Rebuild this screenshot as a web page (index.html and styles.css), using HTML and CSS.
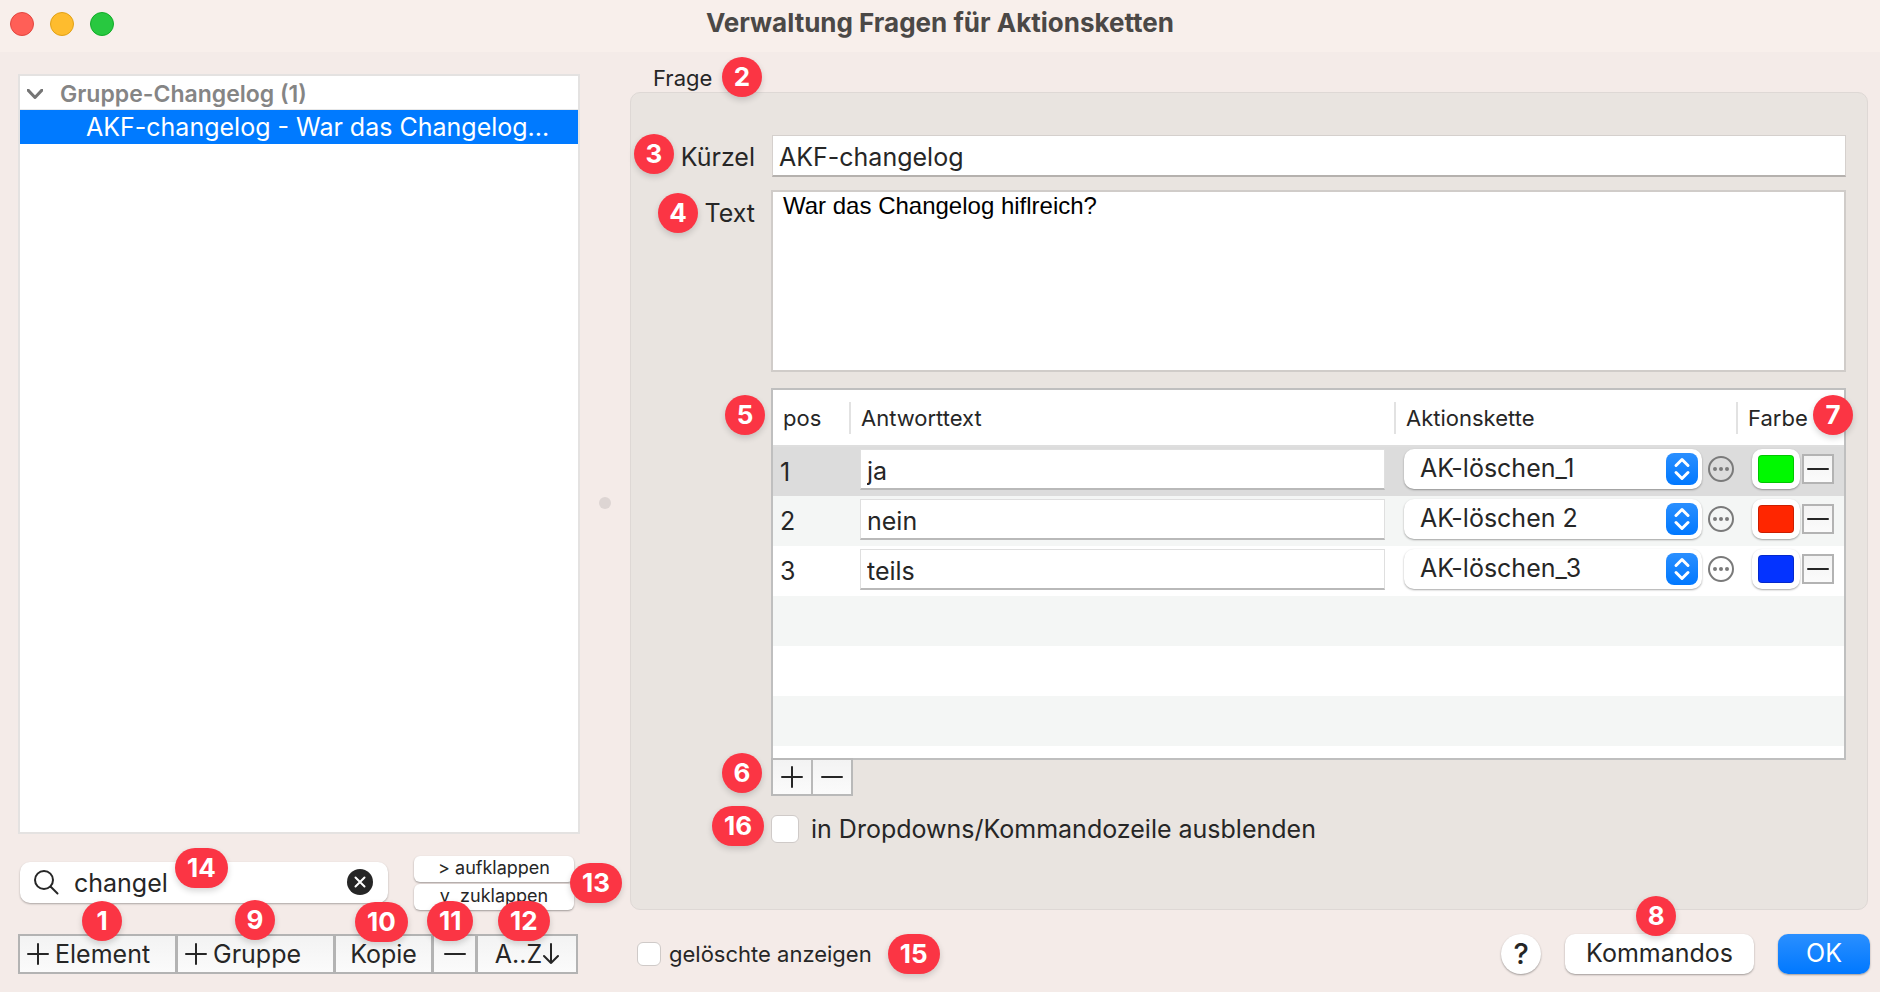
FILE: index.html
```html
<!DOCTYPE html>
<html lang="de">
<head>
<meta charset="utf-8">
<title>Verwaltung Fragen für Aktionsketten</title>
<link rel="stylesheet" href="styles.css">
</head>
<body>
<svg class="defs" aria-hidden="true">
  <symbol id="plus" viewBox="0 0 22 22"><path d="M11 1v20M1 11h20"/></symbol>
  <symbol id="minus" viewBox="0 0 22 22"><path d="M1 11h20"/></symbol>
  <symbol id="updown" viewBox="0 0 32 32"><path d="M10 12.500l6-6 6 6M10 19.500l6 6 6-6"/></symbol>
  <symbol id="more" viewBox="0 0 26 26"><circle cx="13" cy="13" r="12"/><g class="dots"><circle cx="7" cy="13" r="2"/><circle cx="13" cy="13" r="2"/><circle cx="19" cy="13" r="2"/></g></symbol>
</svg>

<header class="titlebar">
  <div class="lights">
    <button class="light light-close" aria-label="Schließen"></button>
    <button class="light light-min" aria-label="Minimieren"></button>
    <button class="light light-zoom" aria-label="Zoomen"></button>
  </div>
  <h1 class="title">Verwaltung Fragen für Aktionsketten</h1>
</header>

<main class="layout">
  <aside class="sidebar">
    <div class="tree">
      <div class="tree-group">
        <svg class="chevron" viewBox="0 0 16 10"><path d="M1 1l7 7.500 7-7.500"/></svg>
        <span>Gruppe-Changelog (1)</span>
      </div>
      <div class="tree-item">AKF-changelog - War das Changelog...</div>
    </div>

    <div class="filter">
      <div class="search">
        <svg class="search-icon" viewBox="0 0 26 26"><circle cx="11" cy="11" r="9"/><path d="M17.500 17.500l7 7"/></svg>
        <input class="search-input" type="text" value="changel" aria-label="Suche">
        <button class="clear" aria-label="Suche leeren"><svg viewBox="0 0 26 26"><path d="M8.500 8.500l9 9M17.500 8.500l-9 9"/></svg></button>
        <span class="badge b14">14</span>
      </div>
      <div class="fold">
        <button class="fold-btn">&gt; aufklappen</button>
        <button class="fold-btn">v&nbsp; zuklappen</button>
        <span class="badge b13">13</span>
      </div>
    </div>

    <div class="segments">
      <div class="seg-cell wide"><button class="seg"><svg class="sign"><use href="#plus"/></svg>Element</button><span class="badge b1">1</span></div>
      <div class="seg-cell wide"><button class="seg"><svg class="sign"><use href="#plus"/></svg>Gruppe</button><span class="badge b9">9</span></div>
      <div class="seg-cell copy"><button class="seg center">Kopie</button><span class="badge b10">10</span></div>
      <div class="seg-cell remove"><button class="seg center" aria-label="Entfernen"><svg class="sign"><use href="#minus"/></svg></button><span class="badge b11">11</span></div>
      <div class="seg-cell sort"><button class="seg center">A..Z<svg class="arrow" viewBox="0 0 16 22"><path d="M8 1v19M1 13l7 7 7-7"/></svg></button><span class="badge b12">12</span></div>
    </div>
  </aside>

  <div class="splitter"><span class="grip"></span></div>

  <section class="detail">
    <div class="caption">Frage<span class="badge b2">2</span></div>
    <div class="panel">
      <div class="form">
        <div class="label-cell"><label for="code">Kürzel</label><span class="badge b3">3</span></div>
        <input class="field" id="code" type="text" value="AKF-changelog">
        <div class="label-cell label-top"><label for="text">Text</label><span class="badge b4">4</span></div>
        <textarea class="area" id="text">War das Changelog hiflreich?</textarea>
        <div class="answers-wrap">
          <div class="answers">
            <table class="grid">
              <colgroup><col class="c-pos"><col><col class="c-chain"><col class="c-color"></colgroup>
              <thead><tr><th>pos</th><th>Antworttext</th><th>Aktionskette</th><th>Farbe</th></tr></thead>
              <tbody>
                <tr class="selected">
                  <td class="pos">1</td>
                  <td><input class="answer" type="text" value="ja" aria-label="Antworttext 1"></td>
                  <td><div class="chain"><div class="pick"><select aria-label="Aktionskette 1"><option>AK-löschen_1</option></select><svg class="stepper"><use href="#updown"/></svg></div><button class="more" aria-label="Mehr"><svg><use href="#more"/></svg></button></div></td>
                  <td><div class="tint"><button class="well" aria-label="Farbe Grün"><span class="swatch green"></span></button><button class="drop" aria-label="Zeile entfernen"><svg><use href="#minus"/></svg></button></div></td>
                </tr>
                <tr>
                  <td class="pos">2</td>
                  <td><input class="answer" type="text" value="nein" aria-label="Antworttext 2"></td>
                  <td><div class="chain"><div class="pick"><select aria-label="Aktionskette 2"><option>AK-löschen 2</option></select><svg class="stepper"><use href="#updown"/></svg></div><button class="more" aria-label="Mehr"><svg><use href="#more"/></svg></button></div></td>
                  <td><div class="tint"><button class="well" aria-label="Farbe Rot"><span class="swatch red"></span></button><button class="drop" aria-label="Zeile entfernen"><svg><use href="#minus"/></svg></button></div></td>
                </tr>
                <tr>
                  <td class="pos">3</td>
                  <td><input class="answer" type="text" value="teils" aria-label="Antworttext 3"></td>
                  <td><div class="chain"><div class="pick"><select aria-label="Aktionskette 3"><option>AK-löschen_3</option></select><svg class="stepper"><use href="#updown"/></svg></div><button class="more" aria-label="Mehr"><svg><use href="#more"/></svg></button></div></td>
                  <td><div class="tint"><button class="well" aria-label="Farbe Blau"><span class="swatch blue"></span></button><button class="drop" aria-label="Zeile entfernen"><svg><use href="#minus"/></svg></button></div></td>
                </tr>
              </tbody>
            </table>
          </div>
          <span class="badge b5">5</span>
          <span class="badge b7">7</span>
        </div>
        <div class="row-tools">
          <button class="tool" aria-label="Zeile hinzufügen"><svg><use href="#plus"/></svg></button>
          <button class="tool" aria-label="Zeile löschen"><svg><use href="#minus"/></svg></button>
          <span class="badge b6">6</span>
        </div>
        <label class="check hide-check"><input type="checkbox"><span>in Dropdowns/Kommandozeile ausblenden</span><span class="badge b16">16</span></label>
      </div>
    </div>
    <footer class="footer">
      <label class="check deleted-check"><input type="checkbox"><span>gelöschte anzeigen</span></label>
      <span class="badge b15">15</span>
      <div class="actions">
        <button class="help" aria-label="Hilfe">?</button>
        <div class="commands"><button class="push">Kommandos</button><span class="badge b8">8</span></div>
        <button class="push primary">OK</button>
      </div>
    </footer>
  </section>
</main>
</body>
</html>
```
FILE: styles.css
```css
* { box-sizing: border-box; }

body {
  margin: 0;
  min-height: 100vh;
  display: flex;
  flex-direction: column;
  background: #f4ebe8;
  color: #262626;
  font: 25px/30px Inter, "Liberation Sans", sans-serif;
}

button, input, select, textarea {
  margin: 0;
  padding: 0;
  border: 0;
  border-radius: 0;
  color: inherit;
  font: inherit;
}

svg {
  display: block;
  fill: none;
  stroke: #262626;
  stroke-width: 2;
  stroke-linecap: round;
  stroke-linejoin: round;
}

.defs { position: absolute; width: 0; height: 0; }
.dots { fill: #7a7a7a; stroke: none; }

/* Title bar */
.titlebar {
  display: grid;
  grid-template-columns: 1fr auto 1fr;
  align-items: center;
  height: 52px;
  padding: 0 10px 4px;
  background: #f8efeb;
}
.lights { display: flex; gap: 16px; }
.light { width: 24px; height: 24px; border: 1px solid; border-radius: 50%; }
.light-close { background: #ff5f57; border-color: #e2463f; }
.light-min { background: #febc2e; border-color: #e1a116; }
.light-zoom { background: #28c840; border-color: #12ac28; }
.title { margin: 0; padding-bottom: 2px; font-size: 26px; font-weight: 700; color: #4b4846; }

/* Numbered callouts */
.badge {
  position: absolute;
  min-width: 40px;
  height: 40px;
  padding: 0 12px;
  border-radius: 20px;
  background: #fb3544;
  box-shadow: 0 3px 6px rgba(0, 0, 0, .16);
  color: #fff;
  font: 700 26px/39px Inter, "Liberation Sans", sans-serif;
  text-align: center;
  z-index: 2;
}
.b1 { left: 64px; top: -33px; }
.b9 { left: 59px; top: -34px; }
.b10 { left: 21px; top: -32px; }
.b11 { left: -5px; top: -33px; }
.b12 { left: 22px; top: -33px; }
.b13 { right: -48px; top: 7px; }
.b14 { left: 155px; top: -14px; }
.b2 { left: 92px; }
.b3 { left: 3px; top: -1px; }
.b4 { left: 27px; top: 3px; }
.b5 { left: -46px; top: 7px; }
.b7 { right: -7px; top: 7px; }
.b6 { left: -49px; top: -5px; }
.b16 { left: -59px; top: -8px; }
.b8 { left: 71px; top: -38px; }
.b1, .b2, .b3, .b4, .b5, .b6, .b7, .b8, .b9 { padding: 0; }

.layout {
  flex: 1;
  display: grid;
  grid-template-columns: 562fr 50px 1238fr;
  padding: 0 12px 18px 18px;
}

/* Left column */
.sidebar { display: flex; flex-direction: column; padding-top: 22px; }
.tree { flex: 1; border: 2px solid #e4e2e1; background: #fff; }
.tree-group {
  display: flex;
  align-items: center;
  gap: 17px;
  height: 34px;
  padding: 2px 0 0 7px;
  border-bottom: 1px solid #e8e8e8;
  color: #858585;
  font-size: 23px;
  font-weight: 600;
}
.chevron { width: 16px; height: 10px; stroke: #757575; stroke-width: 3; }
.tree-item {
  height: 34px;
  padding-left: 66px;
  background: #007aff;
  color: #fff;
  line-height: 34px;
  white-space: nowrap;
  overflow: hidden;
}

.filter { display: flex; justify-content: space-between; align-items: center; margin-top: 22px; padding: 0 6px 0 2px; }
.search {
  position: relative;
  display: flex;
  align-items: center;
  width: 368px;
  height: 41px;
  margin-top: -2px;
  padding: 0 15px 0 13px;
  border-radius: 10px;
  background: #fff;
  box-shadow: 0 1px 2px rgba(0, 0, 0, .3);
}
.search-icon { width: 26px; height: 26px; margin-right: 15px; }
.search-input { flex: 1; min-width: 0; padding-top: 2px; background: none; outline: 0; }
.clear { width: 26px; height: 26px; border-radius: 50%; background: #262626; }
.clear svg { stroke: #fff; width: 26px; height: 26px; }
.fold { position: relative; display: flex; flex-direction: column; gap: 2px; width: 160px; }
.fold-btn {
  height: 26px;
  border-radius: 6px;
  background: #fff;
  box-shadow: 0 1px 2px rgba(0, 0, 0, .35);
  font-size: 18px;
  line-height: 24px;
  padding-bottom: 2px;
}

.segments { display: flex; margin-top: 24px; padding-right: 2px; }
.seg-cell { position: relative; margin-left: -1px; }
.seg-cell:first-child { margin-left: 0; }
.wide { flex: 159; }
.copy { flex: 99; }
.remove { flex: 45; }
.sort { flex: 102; }
.seg {
  display: flex;
  align-items: center;
  gap: 6px;
  width: 100%;
  height: 40px;
  padding-left: 7px;
  border: 2px solid #b3b3b3;
  background: linear-gradient(#f3f3f3, #fbfbfb);
}
.seg.center { justify-content: center; padding: 0; gap: 1px; }
.sign { width: 22px; height: 22px; }
.arrow { width: 16px; height: 22px; }

/* Splitter */
.splitter { display: flex; align-items: center; justify-content: center; padding-bottom: 20px; }
.grip { width: 12px; height: 12px; border-radius: 50%; background: #ddd5d3; }

/* Right column */
.detail { display: flex; flex-direction: column; }
.caption { position: relative; padding: 12px 0 0 23px; height: 40px; font-size: 22px; line-height: 28px; }
.caption .badge { top: 5px; }
.panel {
  flex: 1;
  display: flex;
  padding: 42px 21px 65px 0;
  border: 1px solid #ded8d5;
  border-radius: 10px;
  background: #e9e4e0;
}
.form {
  flex: 1;
  display: grid;
  grid-template-columns: 124px 1fr;
  grid-template-rows: auto auto 1fr auto auto;
  column-gap: 16px;
}
.label-cell { position: relative; padding-top: 7px; text-align: right; }
.label-top { padding-top: 8px; }
.field {
  height: 42px;
  margin-left: 1px;
  padding: 2px 6px 0;
  border: 1px solid #d5d0cd;
  border-bottom: 2px solid #b5b1ae;
  background: #fff;
}
.area {
  height: 182px;
  margin-top: 13px;
  padding: 0 10px;
  border: 2px solid #d0ccc9;
  background: #fff;
  color: #000;
  font: 24px/28px "Liberation Sans", Arial, sans-serif;
  resize: none;
}
.label-top { margin-top: 13px; }
.answers-wrap { grid-column: 2; position: relative; display: flex; margin-top: 16px; }
.answers {
  flex: 1;
  border: 2px solid #bfbfbf;
  background: repeating-linear-gradient(#fff 0 6px, #f4f6f5 6px 56px, #fff 56px 100px);
}
.grid { width: 100%; border-collapse: collapse; table-layout: fixed; }
.c-pos { width: 76px; }
.c-chain { width: 342px; }
.c-color { width: 108px; }
.grid thead tr { height: 56px; background: #fff; border-bottom: 2px solid #dedede; }
.grid th { padding: 0 0 0 12px; font-size: 22px; font-weight: 400; text-align: left; background: linear-gradient(#e2e2e2, #e2e2e2) left center / 2px 32px no-repeat; }
.grid th:first-child { padding-left: 10px; background: none; }
.grid tbody tr { height: 50px; background: #fff; }
.grid tbody tr:nth-child(2) { background: #f4f6f5; }
.grid tbody tr.selected { background: #dcdcdc; }
.grid td { padding: 0; }
.grid .pos { padding: 0 0 0 7px; }
.answer {
  display: block;
  width: calc(100% - 20px);
  height: 41px;
  margin: 0 0 4px 11px;
  padding: 4px 6px 0;
  border: 1px solid #dfdfdf;
  border-bottom: 2px solid #b9b9b9;
  background: #fff;
}
.chain { display: flex; align-items: center; gap: 6px; padding-left: 10px; margin-bottom: 5px; }
.pick { position: relative; flex: 0 0 298px; }
.pick select {
  display: block;
  width: 100%;
  height: 40px;
  padding: 0 40px 2px 16px;
  appearance: none;
  border-radius: 10px;
  background: #fff;
  box-shadow: 0 1px 2px rgba(0, 0, 0, .35);
}
.stepper {
  position: absolute;
  right: 4px;
  top: 4px;
  width: 32px;
  height: 32px;
  border-radius: 8px;
  background: linear-gradient(#2a8fff, #0078ff);
  stroke: #fff;
  stroke-width: 3;
  pointer-events: none;
}
.more { width: 26px; height: 26px; background: none; }
.more svg { width: 26px; height: 26px; stroke: #7a7a7a; }
.tint { display: flex; align-items: center; gap: 2px; padding-left: 16px; margin-bottom: 5px; }
.well {
  flex: none;
  width: 48px;
  height: 40px;
  padding: 6px;
  border-radius: 10px;
  background: #fff;
  box-shadow: 0 1px 2px rgba(0, 0, 0, .35);
}
.swatch { display: block; height: 28px; border: 1px solid rgba(0, 0, 0, .2); border-radius: 4px; }
.green { background: #00f900; }
.red { background: #ff2600; }
.blue { background: #0433ff; }
.drop {
  display: flex;
  flex: none;
  align-items: center;
  justify-content: center;
  width: 32px;
  height: 30px;
  border: 2px solid #b3b3b3;
  background: linear-gradient(#f3f3f3, #fbfbfb);
}
.drop svg, .tool svg { width: 22px; height: 22px; }

.row-tools { grid-column: 2; position: relative; justify-self: start; display: flex; margin-top: -2px; }
.tool {
  display: flex;
  align-items: center;
  justify-content: center;
  width: 42px;
  height: 38px;
  border: 2px solid #b9b9b9;
  background: linear-gradient(#f3f3f3, #fbfbfb);
}
.tool + .tool { margin-left: -2px; }

.check { position: relative; display: flex; align-items: center; white-space: nowrap; }
.check input {
  appearance: none;
  width: 28px;
  height: 28px;
  border: 1px solid #cfcac8;
  border-radius: 6px;
  background: #fff;
}
.hide-check { grid-column: 2; justify-self: start; gap: 12px; margin-top: 18px; height: 30px; }
.deleted-check { gap: 8px; font-size: 22px; }
.deleted-check input { width: 24px; height: 24px; }

.footer { position: relative; display: flex; align-items: center; margin-top: 24px; padding: 0 0 0 7px; }
.b15 { position: static; margin-left: 16px; }
.actions { display: flex; align-items: center; gap: 24px; margin: 0 -2px 0 auto; }
.help {
  width: 40px;
  height: 40px;
  border-radius: 50%;
  background: #fff;
  box-shadow: 0 1px 2px rgba(0, 0, 0, .35);
  font-size: 29px;
  font-weight: 500;
}
.commands { position: relative; }
.push {
  height: 40px;
  padding: 0 21px 2px;
  min-width: 92px;
  border-radius: 10px;
  background: #fff;
  box-shadow: 0 1px 2px rgba(0, 0, 0, .35);
}
.primary { background: linear-gradient(#2a8fff, #0078ff); color: #fff; }
```
